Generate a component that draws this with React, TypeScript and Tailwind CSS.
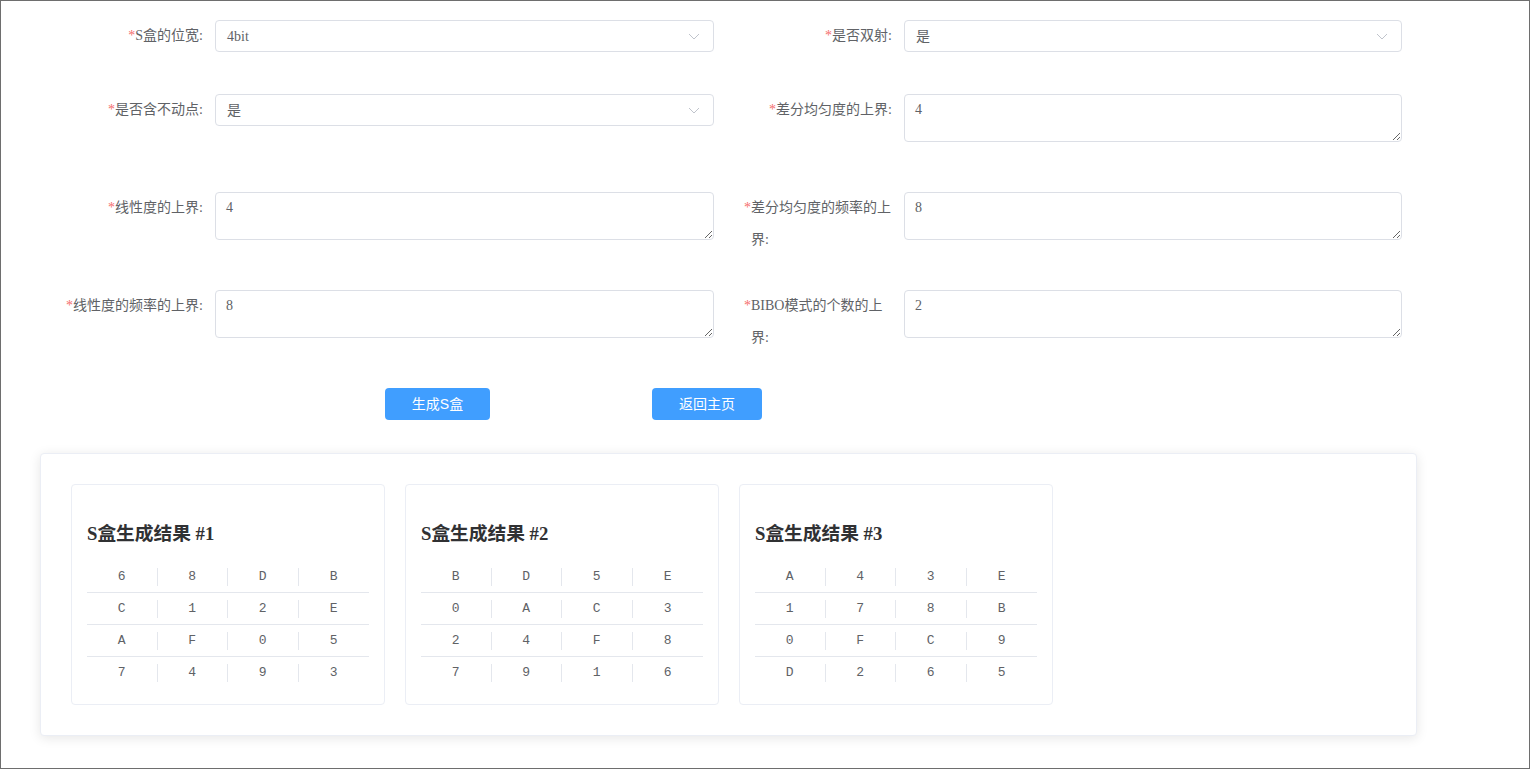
import React from "react";

const serif = "font-['Liberation_Serif','Noto_Sans_CJK_SC',serif]";

type Field = { label: string; kind: "select" | "textarea"; value: string };

const rows: [Field, Field, string][] = [
  [
    { label: "S盒的位宽:", kind: "select", value: "4bit" },
    { label: "是否双射:", kind: "select", value: "是" },
    "h-[74px]",
  ],
  [
    { label: "是否含不动点:", kind: "select", value: "是" },
    { label: "差分均匀度的上界:", kind: "textarea", value: "4" },
    "h-[98px]",
  ],
  [
    { label: "线性度的上界:", kind: "textarea", value: "4" },
    { label: "差分均匀度的频率的上界:", kind: "textarea", value: "8" },
    "h-[98px]",
  ],
  [
    { label: "线性度的频率的上界:", kind: "textarea", value: "8" },
    { label: "BIBO模式的个数的上界:", kind: "textarea", value: "2" },
    "h-[98px]",
  ],
];

const boxes: string[][][] = [
  [
    ["6", "8", "D", "B"],
    ["C", "1", "2", "E"],
    ["A", "F", "0", "5"],
    ["7", "4", "9", "3"],
  ],
  [
    ["B", "D", "5", "E"],
    ["0", "A", "C", "3"],
    ["2", "4", "F", "8"],
    ["7", "9", "1", "6"],
  ],
  [
    ["A", "4", "3", "E"],
    ["1", "7", "8", "B"],
    ["0", "F", "C", "9"],
    ["D", "2", "6", "5"],
  ],
];

function FormItem({ f, wide }: { f: Field; wide: string }) {
  return (
    <div className={`flex items-start ${wide}`}>
      <label className="flex justify-end items-start w-[160px] shrink-0 pr-[12px] leading-[32px] text-[14px] text-[#606266]">
        <span className="text-[#f56c6c]">*</span>
        <span className="min-w-0">{f.label}</span>
      </label>
      {f.kind === "select" ? (
        <div className="flex-1 h-[32px] border border-[#dcdfe6] rounded-[4px] bg-white flex items-center pl-[11px] pr-[13px]">
          <span className="flex-1 text-[14px] text-[#606266]">{f.value}</span>
          <svg width="12" height="7" viewBox="0 0 12 7" fill="none">
            <polyline points="1,1 6,6 11,1" stroke="#c0c4cc" strokeWidth="1" />
          </svg>
        </div>
      ) : (
        <textarea
          defaultValue={f.value}
          className={`flex-1 h-[48px] border border-[#dcdfe6] rounded-[4px] px-[10px] py-[4px] text-[14px] leading-[21px] text-[#606266] outline-none ${serif}`}
        />
      )}
    </div>
  );
}

function BoxCard({ n, data }: { n: number; data: string[][] }) {
  return (
    <div className="w-[314px] border border-[#ebeef5] rounded-[4px] bg-white p-[15px]">
      <h3 className="mt-[21px] mb-[15px] h-[25px] leading-[25px] text-[18.72px] font-bold text-[#303133]">
        S盒生成结果 #{n}
      </h3>
      <div className="font-['Liberation_Mono',monospace] text-[13px] text-[#606266]">
        {data.map((row, i) => (
          <div
            key={i}
            className={`grid grid-cols-4 h-[32px] ${i < data.length - 1 ? "border-b border-[#e4e7ed]" : ""}`}
          >
            {row.map((c, j) => (
              <div key={j} className="flex items-center">
                <span className="flex-1 text-center leading-[18px]">{c}</span>
                {j < 3 && <span className="w-px h-[18px] bg-[#e4e7ed]" />}
              </div>
            ))}
          </div>
        ))}
      </div>
    </div>
  );
}

export default function App() {
  return (
    <div className={`w-[1530px] h-[769px] border border-[#6e6e6e] bg-white overflow-hidden ${serif}`}>
      <div className="pt-[19px] pl-[54px] flex flex-col">
        {rows.map(([a, b, h], i) => (
          <div key={i} className={`flex gap-[30px] ${h}`}>
            <FormItem f={a} wide="w-[659px]" />
            <FormItem f={b} wide="w-[658px]" />
          </div>
        ))}
      </div>
      <div className="flex pl-[384px] gap-[162px] font-['Liberation_Sans','Noto_Sans_CJK_SC',sans-serif]">
        <button className="w-[105px] h-[32px] rounded-[4px] bg-[#409eff] text-white text-[14px]">生成S盒</button>
        <button className="w-[110px] h-[32px] rounded-[4px] bg-[#409eff] text-white text-[14px]">返回主页</button>
      </div>
      <div className="ml-[39px] mt-[33px] w-[1377px] border border-[#ebeef5] rounded-[4px] bg-white shadow-[0_2px_12px_0_rgba(0,0,0,0.1)] p-[30px]">
        <div className="flex gap-[20px]">
          {boxes.map((d, i) => (
            <BoxCard key={i} n={i + 1} data={d} />
          ))}
        </div>
      </div>
    </div>
  );
}
